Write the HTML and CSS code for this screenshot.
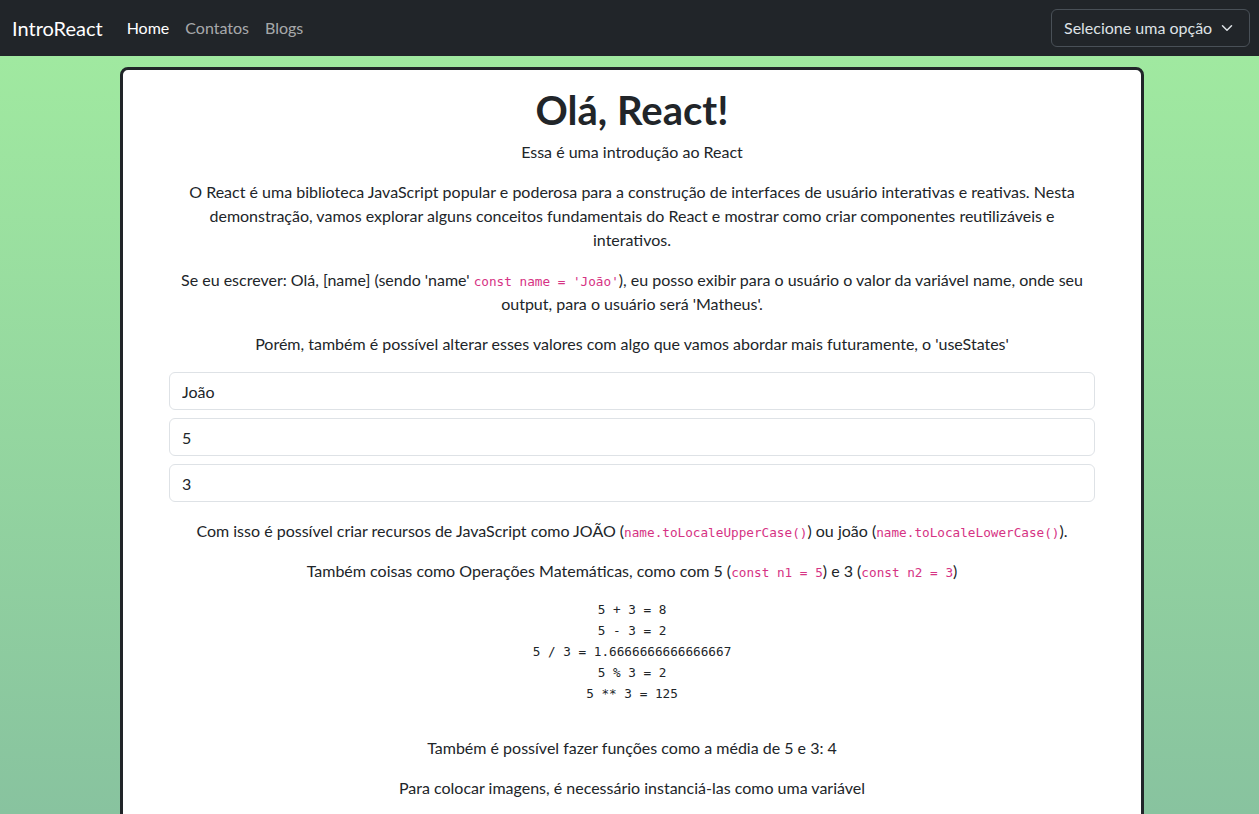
FILE: index.html
```html
<!DOCTYPE html>
<html lang="pt-BR">
<head>
<meta charset="utf-8">
<title>IntroReact</title>
<link rel="stylesheet" href="styles.css">
</head>
<body>
<nav class="navbar">
  <div class="nav-left">
    <a class="brand" href="#">IntroReact</a>
    <ul class="nav-links">
      <li><a class="nav-link active" href="#">Home</a></li>
      <li><a class="nav-link" href="#">Contatos</a></li>
      <li><a class="nav-link" href="#">Blogs</a></li>
    </ul>
  </div>
  <div class="select">
    <span>Selecione uma opção</span>
    <svg class="chevron" width="12" height="12" viewBox="0 0 16 16"><path d="M2 5l6 6 6-6" fill="none" stroke="#dee2e6" stroke-width="2" stroke-linecap="round" stroke-linejoin="round"/></svg>
  </div>
</nav>
<main class="page">
  <section class="card">
    <h1 class="title">Olá, React!</h1>
    <p class="subtitle">Essa é uma introdução ao React</p>
    <p>O React é uma biblioteca JavaScript popular e poderosa para a construção de interfaces de usuário interativas e reativas. Nesta demonstração, vamos explorar alguns conceitos fundamentais do React e mostrar como criar componentes reutilizáveis e interativos.</p>
    <p>Se eu escrever: Olá, [name] (sendo 'name' <code>const name = 'João'</code>), eu posso exibir para o usuário o valor da variável name, onde seu output, para o usuário será 'Matheus'.</p>
    <p>Porém, também é possível alterar esses valores com algo que vamos abordar mais futuramente, o 'useStates'</p>
    <div class="inputs">
      <input class="form-control" type="text" value="João">
      <input class="form-control" type="text" value="5">
      <input class="form-control" type="text" value="3">
    </div>
    <p>Com isso é possível criar recursos de JavaScript como JOÃO (<code>name.toLocaleUpperCase()</code>) ou joão (<code>name.toLocaleLowerCase()</code>).</p>
    <p>Também coisas como Operações Matemáticas, como com 5 (<code>const n1 = 5</code>) e 3 (<code>const n2 = 3</code>)</p>
    <pre class="math">5 + 3 = 8
5 - 3 = 2
5 / 3 = 1.6666666666666667
5 % 3 = 2
5 ** 3 = 125</pre>
    <p>Também é possível fazer funções como a média de 5 e 3: 4</p>
    <p>Para colocar imagens, é necessário instanciá-las como uma variável</p>
    <p>&nbsp;</p>
  </section>
</main>
</body>
</html>
```

FILE: styles.css
```css
* { box-sizing: border-box; }
html, body { margin: 0; height: 100%; }
body {
  font-family: Lato, "Noto Sans", sans-serif;
  font-size: 16px;
  line-height: 24px;
  color: #212529;
  display: flex;
  flex-direction: column;
  overflow: hidden;
}
.navbar {
  height: 56px;
  flex: 0 0 56px;
  background: #212529;
  display: flex;
  align-items: center;
  justify-content: space-between;
  padding: 0 9px 0 12px;
}
.nav-left { display: flex; align-items: center; }
.brand {
  color: #fff;
  font-size: 20px;
  line-height: 30px;
  text-decoration: none;
  margin-right: 16px;
}
.nav-links { list-style: none; margin: 0; padding: 0; display: flex; }
.nav-link {
  display: block;
  padding: 8px;
  color: rgba(255,255,255,0.62);
  text-decoration: none;
}
.nav-link.active { color: #fff; }
.select {
  width: 199px;
  height: 38px;
  border: 1px solid #495057;
  border-radius: 6px;
  color: #dee2e6;
  display: flex;
  align-items: center;
  justify-content: space-between;
  padding: 0 16px 0 12px;
}
.chevron { display: block; }
.page {
  flex: 1;
  background: linear-gradient(180deg, #a0e9a0 0%, #88c39f 100%);
  padding-top: 11px;
  padding-left: 120px;
  overflow: hidden;
}
.card {
  width: 1024px;
  background: #fff;
  border: 3px solid #212529;
  border-radius: 8px;
  padding: 16px 46px;
  text-align: center;
}
.title {
  font-size: 40px;
  line-height: 48px;
  font-weight: 700;
  margin: 0 0 6px;
}
p { margin: 0 0 16px; }
code {
  font-family: "DejaVu Sans Mono", "Liberation Mono", monospace;
  font-size: 12.7px;
  line-height: 1;
  color: #d63384;
}
.inputs {
  display: flex;
  flex-direction: column;
  gap: 8px;
  margin: 0 0 17px;
}
.form-control {
  display: block;
  width: 100%;
  height: 38px;
  padding: 6px 12px;
  font: inherit;
  color: #212529;
  border: 1px solid #dee2e6;
  border-radius: 6px;
  background: #fff;
}
.math {
  font-family: "DejaVu Sans Mono", "Liberation Mono", monospace;
  font-size: 12.7px;
  line-height: 21px;
  margin: 15px 0 32px;
  color: #212529;
}
```
